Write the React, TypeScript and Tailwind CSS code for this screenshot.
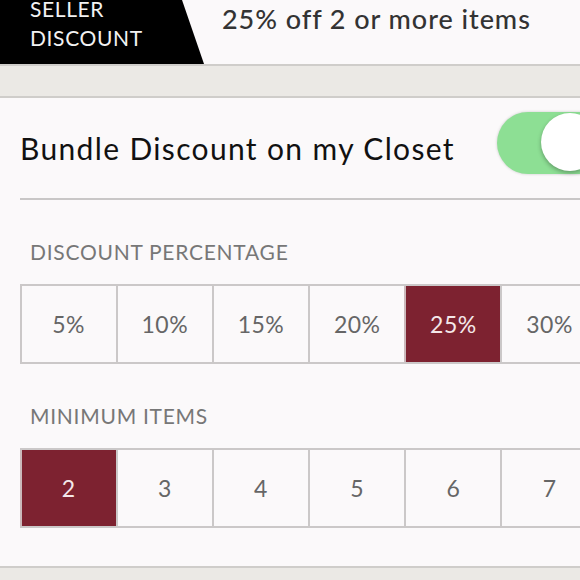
import React from "react";

const font = { fontFamily: '"Lato", "Open Sans", sans-serif' };

function Seg({ items, selected }: { items: string[]; selected: string }) {
  return (
    <div className="flex h-[80px] border-y-2 border-[#cbc8c8] ml-[19.5px] w-[600px]">
      {items.map((it) => {
        const sel = it === selected;
        return (
          <div
            key={it}
            className={`w-[96.2px] shrink-0 flex items-center justify-center text-[23px] tracking-[0.02em] border-l-2 ${
              sel ? "bg-[#7d2230] text-[#f4e7e9] border-[#cbb9bb]" : "text-[#666] border-[#cbc8c8]"
            }`}
          >
            {it}
          </div>
        );
      })}
    </div>
  );
}

export default function App() {
  return (
    <div className="w-[580px] h-[580px] overflow-hidden bg-[#ebe9e5] relative" style={font}>
      {/* header */}
      <div className="h-[66px] bg-[#fbf9fa] flex items-stretch border-b-2 border-[#cfcdca] relative">
        <div className="w-[204px] h-full bg-black text-[#f2f2f2] [clip-path:polygon(0_0,182px_0,100%_100%,0_100%)] pl-[30px] text-[21px] tracking-[0.03em] leading-[29px] pt-[0px]">
          <div className="-mt-[6px]">SELLER</div>
          <div>DISCOUNT</div>
        </div>
        <div className="pl-[18px] text-[27px] font-medium tracking-[0.035em] text-[#333] -mt-[1px]">25% off 2 or more items</div>
      </div>
      {/* gray band */}
      <div className="h-[30px]" />
      {/* panel */}
      <div className="h-[472px] bg-[#fbf9fa] border-y-2 border-[#cfcdca]">
        <div className="h-[102px] ml-[20px] border-b-2 border-[#c9c7c7] flex items-center justify-between relative">
          <div className="text-[30px] tracking-[0.045em] text-[#111] pt-[1px]">Bundle Discount on my Closet</div>
          <div className="absolute left-[477px] top-[14px] w-[120px] h-[62px] rounded-full bg-[#8ddf94] shadow-[0_0_3px_rgba(0,0,0,0.2)]">
            <div className="absolute left-[44px] top-[1px] w-[58px] h-[58px] rounded-full bg-white shadow-[0_2px_4px_rgba(0,0,0,0.3)]" />
          </div>
        </div>
        <div className="pl-[30px] pt-[40px] pb-[20px] text-[21px] tracking-[0.035em] text-[#777] leading-[24px]">DISCOUNT PERCENTAGE</div>
        <Seg items={["5%", "10%", "15%", "20%", "25%", "30%"]} selected="25%" />
        <div className="pl-[30px] pt-[40px] pb-[20px] text-[21px] tracking-[0.035em] text-[#777] leading-[24px]">MINIMUM ITEMS</div>
        <Seg items={["2", "3", "4", "5", "6", "7"]} selected="2" />
      </div>
    </div>
  );
}
